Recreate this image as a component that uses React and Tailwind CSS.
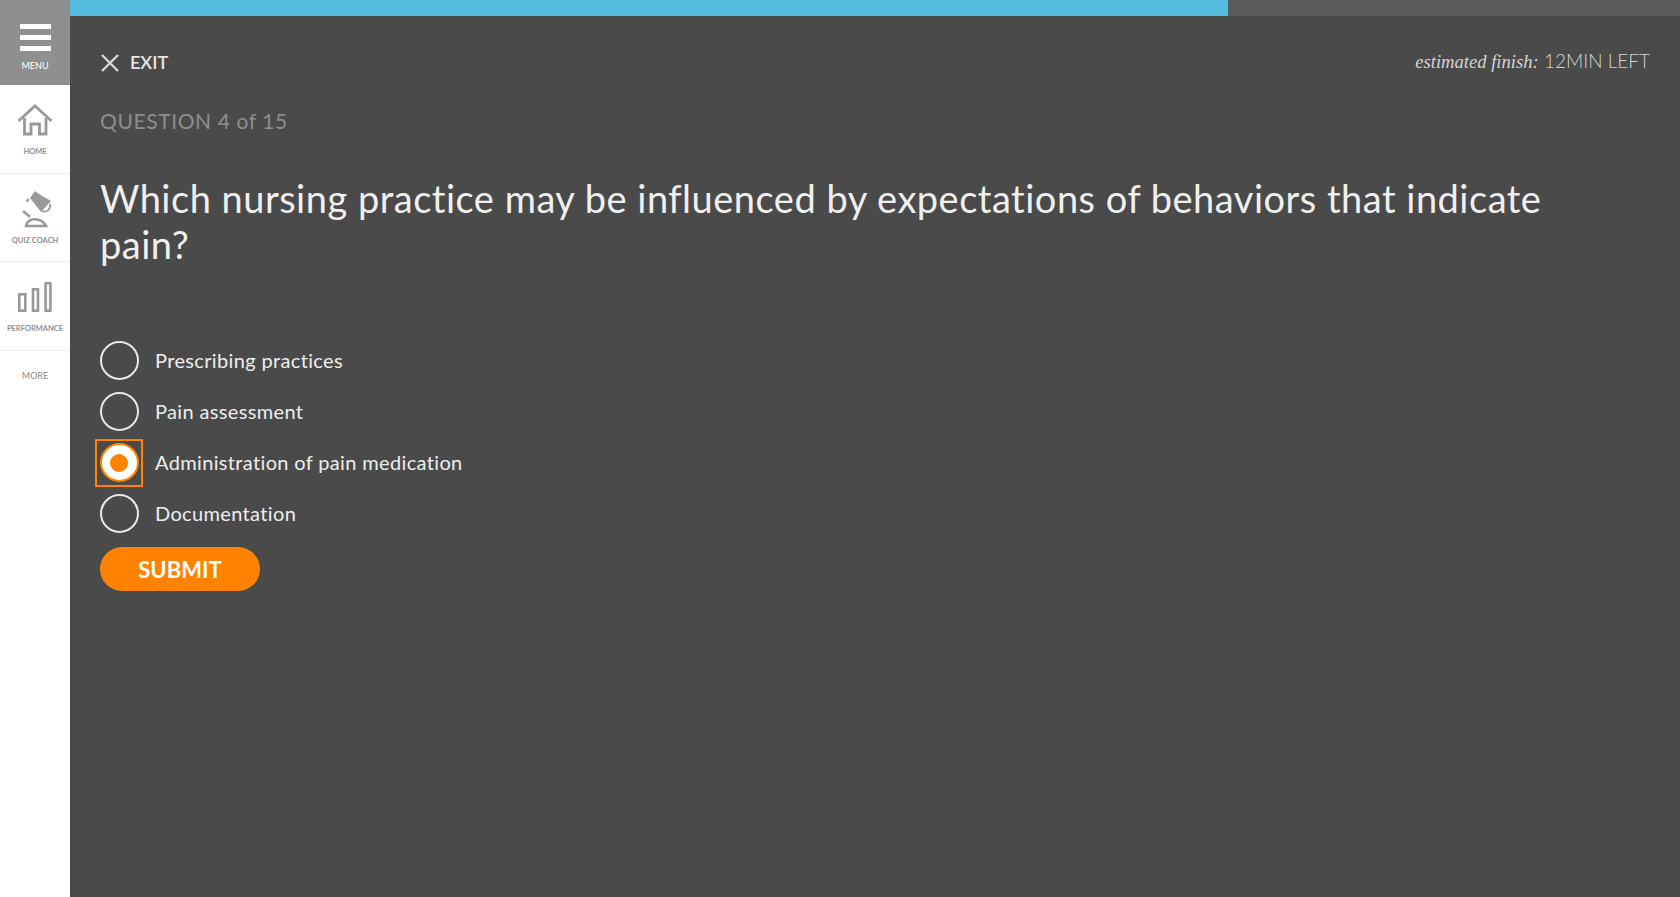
import React from 'react';

const options = [
  { label: 'Prescribing practices' },
  { label: 'Pain assessment' },
  { label: 'Administration of pain medication', selected: true },
  { label: 'Documentation' },
];

const HomeIcon = () => (
  <svg width="40" height="40" viewBox="0 0 40 40" fill="none" stroke="#999999" strokeWidth="2.8">
    <path d="M3.5 21 L20 6 L36.5 21" />
    <path d="M9.5 18 V34 H16 V24 H24.5 V34 H31 V18" />
  </svg>
);

const LampIcon = () => (
  <svg width="40" height="40" viewBox="0 0 40 40" fill="none">
    <path d="M15 9 L20 2 L24 5 L36 12 L26 23 L19 14 Z" fill="#999999" />
    <path d="M35 15 C36 20 32 24 27 22" stroke="#999999" strokeWidth="1.8" />
    <path d="M14 10 L11.5 12.5" stroke="#999999" strokeWidth="2.4" />
    <path d="M8 22 L15 28" stroke="#999999" strokeWidth="2.4" />
    <path d="M11 37 C13 28 26 28 31 37 Z" stroke="#999999" strokeWidth="2.6" />
  </svg>
);

const BarsIcon = () => (
  <svg width="40" height="40" viewBox="0 0 40 40" fill="none" stroke="#999999" strokeWidth="2.6">
    <rect x="4.3" y="17.3" width="6" height="16.4" />
    <rect x="18" y="12.3" width="5" height="21.4" />
    <rect x="30.6" y="6.3" width="4.8" height="27.4" />
  </svg>
);

const NavItem = ({ icon, label }) => (
  <div className="flex h-[88.7px] flex-col items-center border-b border-[#eeeeee] pt-[15px]">
    {icon}
    <span className="mt-[7px] text-[7.5px] font-bold leading-[10px] text-[#8f8f8f] whitespace-nowrap">{label}</span>
  </div>
);

const Sidebar = () => (
  <aside className="flex w-[70px] shrink-0 flex-col bg-white">
    <div className="flex h-[85px] flex-col items-center bg-[#8f8f8f] pt-[24px]">
      <div className="flex w-[31px] flex-col gap-[6px]">
        <div className="h-[5px] bg-white"></div>
        <div className="h-[5px] bg-white"></div>
        <div className="h-[5px] bg-white"></div>
      </div>
      <span className="mt-[9px] text-[9px] leading-[12px] text-white">MENU</span>
    </div>
    <NavItem icon={<HomeIcon />} label="HOME" />
    <NavItem icon={<LampIcon />} label="QUIZ COACH" />
    <NavItem icon={<BarsIcon />} label="PERFORMANCE" />
    <div className="pt-[19px] text-center text-[9px] leading-[12px] text-[#8a8a8a]">MORE</div>
  </aside>
);

const Option = ({ label, selected }) => (
  <div className="flex h-[51px] items-center">
    <div className={`-ml-[5px] flex h-[48px] w-[48px] items-center justify-center ${selected ? 'border-2 border-[#ff8200]' : ''}`}>
      {selected ? (
        <div className="flex h-[39px] w-[39px] items-center justify-center rounded-full border-2 border-[#ff8200] bg-white">
          <div className="h-[18px] w-[18px] rounded-full bg-[#ff8200]"></div>
        </div>
      ) : (
        <div className="h-[39px] w-[39px] rounded-full border-2 border-[#e8e8e8]"></div>
      )}
    </div>
    <span className="ml-[12px] -mt-[1px] text-[20px] tracking-[0.35px] text-[#eeeeee]">{label}</span>
  </div>
);

export default function App() {
  return (
    <div className="flex h-[897px] w-[1680px] overflow-hidden bg-[#4a4a4a] font-['Lato',sans-serif] [font-variant-ligatures:none]">
      <Sidebar />
      <main className="flex min-w-0 flex-1 flex-col">
        <div className="h-[16px] bg-[#5a5b5d]">
          <div className="h-full w-[1158px] bg-[#56bcdf]"></div>
        </div>
        <div className="flex flex-col px-[30px]">
          <div className="flex h-[60px] items-end justify-between">
            <div className="flex items-center gap-[10px] text-[#e6e6e6]">
              <svg width="20" height="20" viewBox="0 0 20 20" stroke="#d8d8d8" strokeWidth="2.4">
                <path d="M2 2 L18 18 M18 2 L2 18" />
              </svg>
              <span className="text-[18px] font-semibold">EXIT</span>
            </div>
            <div className="text-[19px] font-light text-[#d4d4d4]">
              <em className="font-['Liberation_Serif',serif] text-[18.6px] font-normal">estimated finish:</em> 12MIN LEFT
            </div>
          </div>
          <div className="mt-[31px] text-[21px] leading-[28px] tracking-[0.6px] text-[#8e8e8e]">QUESTION 4 of 15</div>
          <h1 className="mt-[40px] max-w-[1470px] text-[38px] font-normal leading-[46px] tracking-[0.5px] text-[#f0f0f0]">
            Which nursing practice may be influenced by expectations of behaviors that indicate pain?
          </h1>
          <div className="mt-[68px] flex flex-col">
            {options.map(o => (
              <Option key={o.label} label={o.label} selected={o.selected} />
            ))}
          </div>
          <button className="mt-[8px] h-[44px] w-[160px] rounded-full bg-[#ff8200] text-[22px] font-bold text-white">SUBMIT</button>
        </div>
      </main>
    </div>
  );
}
